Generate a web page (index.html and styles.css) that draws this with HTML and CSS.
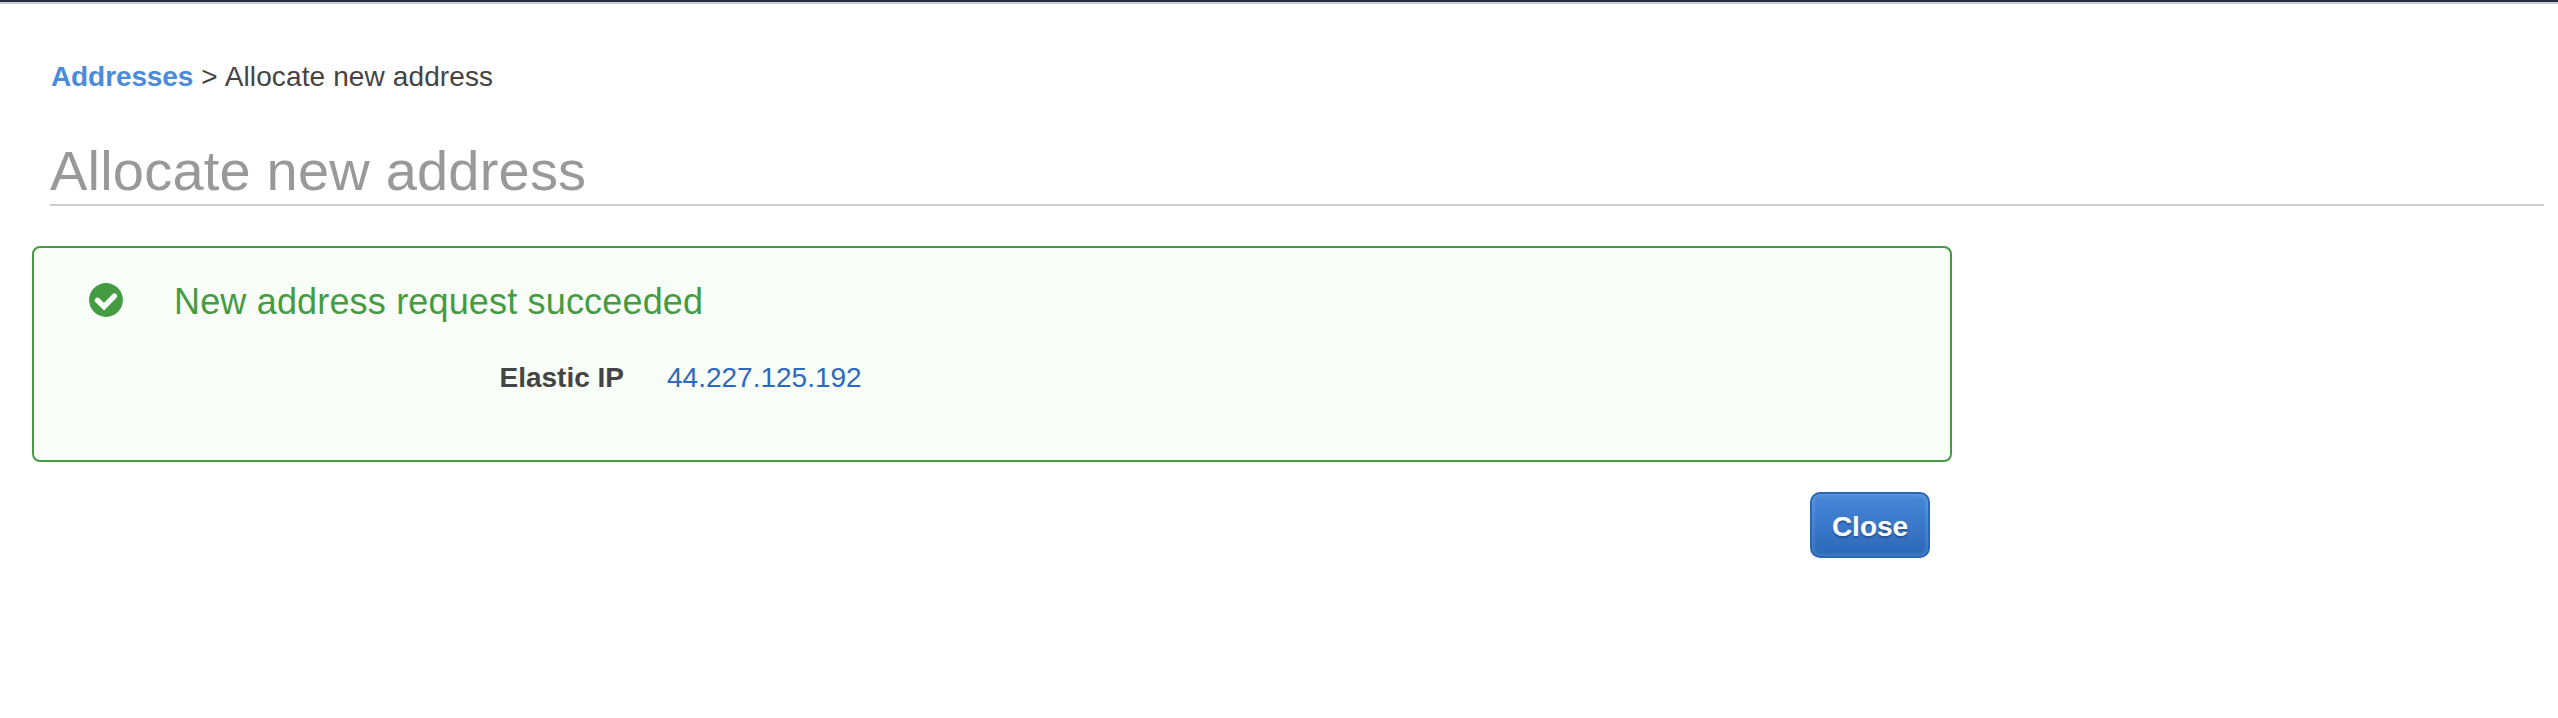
FILE: index.html
```html
<!DOCTYPE html>
<html lang="en">
<head>
<meta charset="utf-8">
<title>Allocate new address</title>
<link rel="stylesheet" href="styles.css">
</head>
<body>
<div class="topbar"></div>
<nav class="breadcrumb"><a class="crumb-link" href="#">Addresses</a><span class="crumb-sep">&gt;</span><span class="crumb-current">Allocate new address</span></nav>
<header class="page-header"><h1 class="page-title"><span class="title-text">Allocate new address</span></h1></header>
<main class="content">
  <section class="alert">
    <svg class="alert-icon" viewBox="0 0 34 34" aria-hidden="true">
      <circle cx="17" cy="17" r="16.9" fill="#449b42"/>
      <path d="M8.4 17.3 15 23.7 25.4 13.1" fill="none" stroke="#f8fdf8" stroke-width="5.4" stroke-linecap="round" stroke-linejoin="miter"/>
    </svg>
    <div class="alert-body">
      <h2 class="alert-title"><span class="alert-text">New address request succeeded</span></h2>
      <div class="detail"><span class="detail-label">Elastic IP</span><a class="detail-value" href="#">44.227.125.192</a></div>
    </div>
  </section>
  <div class="actions"><button class="close" type="button"><span class="close-text">Close</span></button></div>
</main>
</body>
</html>
```
FILE: styles.css
```css
* { box-sizing: border-box; }
body {
  margin: 0;
  background: #fff;
  color: #444;
  font-family: "Liberation Sans", Arial, sans-serif;
  font-size: 28px;
  line-height: 32px;
  white-space: nowrap;
}
a { text-decoration: none; }
.topbar { height: 4px; background: #232f3e; border-bottom: 2px solid #ccc; }
.breadcrumb { display: flex; margin: 57px 0 0 51px; }
.crumb-link { color: #4a8bdb; font-weight: bold; letter-spacing: -0.1px; }
.crumb-sep { margin: 0 7px 0 8px; }
.crumb-current { letter-spacing: 0.12px; }
.page-header { margin: 46px 14px 0 50px; height: 67px; border-bottom: 2px solid #ccc; }
.page-title { margin: 0; color: #999; font-size: 56px; line-height: 64px; font-weight: normal; letter-spacing: 0.2px; }
.content { width: 1920px; margin: 40px 0 0 32px; }
.alert {
  display: flex;
  height: 216px;
  padding: 34px 54px;
  border: 2px solid #449b42;
  border-radius: 8px;
  background: #f8fdf8;
}
.alert-icon { width: 34px; height: 34px; margin: 1px 0 0 1px; flex: none; }
.alert-body { margin-left: 51px; }
.alert-title { margin: 0; color: #449b42; font-size: 36px; line-height: 40px; font-weight: normal; letter-spacing: 0.17px; }
.detail { display: flex; margin-top: 40px; }
.detail-label { width: 450px; text-align: right; font-weight: bold; }
.detail-value { margin-left: 43px; color: #2d69bc; }
.actions { display: flex; justify-content: flex-end; padding: 30px 22px 0 0; }
.close {
  width: 120px;
  height: 66px;
  padding: 3px 0 0;
  border: 2px solid #2866b7;
  border-radius: 10px;
  background: linear-gradient(#4888d9, #2b67b8);
  box-shadow: inset 0 0 4px 1px rgba(255, 255, 255, 0.2);
  color: #fff;
  font: bold 28px/32px "Liberation Sans", Arial, sans-serif;
  text-shadow: 0 2px 1px rgba(0, 0, 0, 0.25);
}
```
